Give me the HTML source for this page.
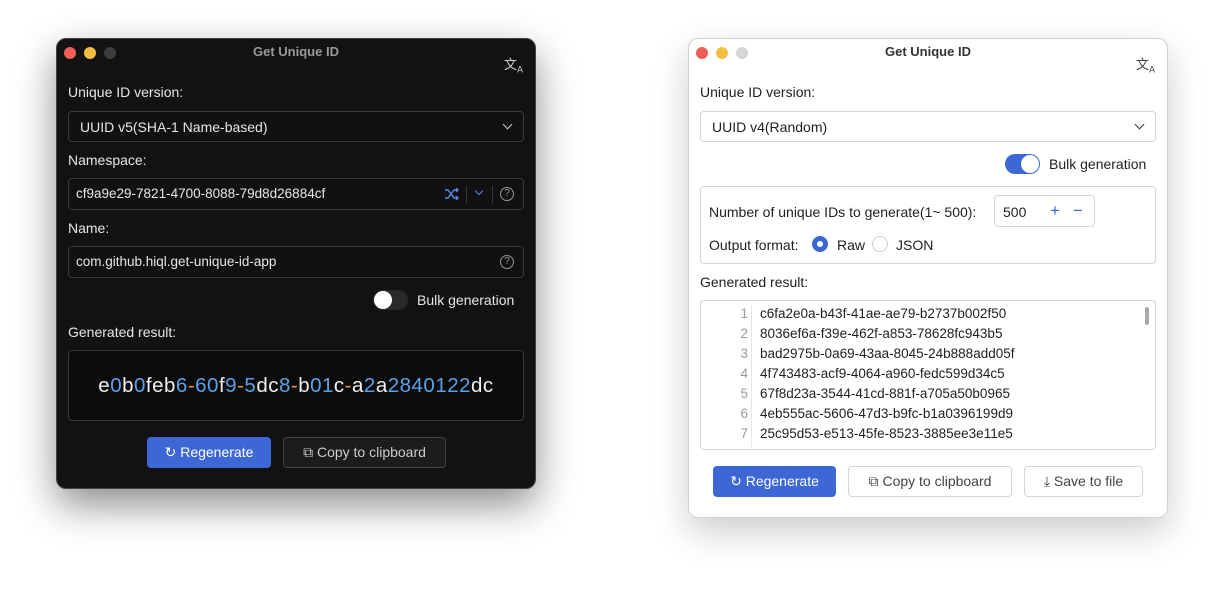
<!DOCTYPE html>
<html><head><meta charset="utf-8"><style>
*{box-sizing:border-box;margin:0;padding:0}
body{width:1224px;height:592px;background:#fff;position:relative;font-family:"Liberation Sans",Helvetica,Arial,sans-serif;font-size:14px;overflow:hidden}
.a{position:absolute}
.win{position:absolute;border-radius:10px;overflow:hidden}
.dark{left:56px;top:38px;width:480px;height:451px;background:#121214;border:1px solid #444;box-shadow:0 16px 40px rgba(0,0,0,.45);color:#e6e6e6}
.light{left:688px;top:38px;width:480px;height:480px;background:#fff;border:1px solid #d0d0d0;box-shadow:0 14px 36px rgba(0,0,0,.2);color:#1f1f1f}
.tl{position:absolute;top:8px;width:12px;height:12px;border-radius:50%}
.title{position:absolute;top:5px;left:0;right:0;text-align:center;font-weight:bold;font-size:13px}
.box{position:absolute;border-radius:4px}
.dark .box{border:1px solid #3a3a3e;background:#111113}
.light .box{border:1px solid #d6d6da;background:#fff}
.btn{position:absolute;height:31px;border-radius:4px;display:flex;align-items:center;justify-content:center;gap:8px;font-size:14px}
.pri{background:#3e67d6;color:#fff}
.chev{position:absolute;width:7px;height:7px;border-right:1.5px solid currentColor;border-bottom:1.5px solid currentColor;transform:rotate(45deg)}
.b{color:#5aa2e6}.o{color:#e8903a}
.ln{position:absolute;left:0;width:47px;text-align:right;color:#9a9a9a}
.q{position:absolute;left:431px;top:8px;width:14px;height:14px;border:1px solid #999;border-radius:50%;font-size:10px;text-align:center;line-height:12px;color:#999}
</style></head><body>

<div class="win dark">
<div class="tl" style="left:7px;background:#ee5d56"></div>
<div class="tl" style="left:27px;background:#f5bd3f"></div>
<div class="tl" style="left:47px;background:#3d3d3f"></div>
<div class="title" style="color:#9a9a9a">Get Unique ID</div>
<div class="a" style="left:447px;top:15px;color:#ccc;font-size:13px">文<sub style="font-size:9px">A</sub></div>
<div class="a" style="left:11px;top:45px">Unique ID version:</div>
<div class="box" style="left:11px;top:72px;width:456px;height:31px"><span class="a" style="left:11px;top:7px">UUID v5(SHA-1 Name-based)</span><span class="chev" style="left:435px;top:9px;color:#ccc"></span></div>
<div class="a" style="left:11px;top:113px">Namespace:</div>
<div class="box" style="left:11px;top:139px;width:456px;height:32px"><span class="a" style="left:7px;top:7px;font-size:13.5px">cf9a9e29-7821-4700-8088-79d8d26884cf</span>
<svg class="a" style="left:375px;top:8px" width="15" height="14" viewBox="0 0 15 14" fill="none" stroke="#5d84e0" stroke-width="1.4"><path d="M1 3h3l6 8h4M1 11h3l6-8h4M12 1l2 2-2 2M12 9l2 2-2 2"/></svg>
<span class="a" style="left:397px;top:7px;width:1px;height:17px;background:#3a3a3e"></span>
<span class="chev" style="left:407px;top:9px;color:#5d84e0;width:6px;height:6px"></span>
<span class="a" style="left:423px;top:7px;width:1px;height:17px;background:#3a3a3e"></span>
<span class="q">?</span></div>
<div class="a" style="left:11px;top:181px">Name:</div>
<div class="box" style="left:11px;top:207px;width:456px;height:32px"><span class="a" style="left:7px;top:7px;font-size:13.5px">com.github.hiql.get-unique-id-app</span>
<span class="q">?</span></div>
<div class="a" style="left:316px;top:251px;width:35px;height:20px;border-radius:10px;background:#2a2a2d"><div class="a" style="left:1px;top:1px;width:18px;height:18px;border-radius:50%;background:#fff"></div></div>
<div class="a" style="left:360px;top:253px">Bulk generation</div>
<div class="a" style="left:11px;top:285px">Generated result:</div>
<div class="box" style="left:11px;top:311px;width:456px;height:71px;background:#0b0b0c"><div class="a" style="left:0;right:0;top:23px;text-align:center;font-size:20.5px;letter-spacing:0.5px;color:#eee">e<span class="b">0</span>b<span class="b">0</span>feb<span class="b">6</span><span class="o">-</span><span class="b">60</span>f<span class="b">9</span><span class="o">-</span><span class="b">5</span>dc<span class="b">8</span><span class="o">-</span>b<span class="b">01</span>c<span class="o">-</span>a<span class="b">2</span>a<span class="b">2840122</span>dc</div></div>
<div class="btn pri" style="left:90px;top:398px;width:124px">↻ Regenerate</div>
<div class="btn" style="left:226px;top:398px;width:163px;border:1px solid #444;background:#1c1c1e;color:#ccc">⧉ Copy to clipboard</div>
</div>

<div class="win light">
<div class="tl" style="left:7px;background:#ee5d56"></div>
<div class="tl" style="left:27px;background:#f5bd3f"></div>
<div class="tl" style="left:47px;background:#d6d6d6"></div>
<div class="title" style="color:#333">Get Unique ID</div>
<div class="a" style="left:447px;top:15px;color:#444;font-size:13px">文<sub style="font-size:9px">A</sub></div>
<div class="a" style="left:11px;top:45px">Unique ID version:</div>
<div class="box" style="left:11px;top:72px;width:456px;height:31px"><span class="a" style="left:11px;top:7px">UUID v4(Random)</span><span class="chev" style="left:435px;top:9px;color:#333"></span></div>
<div class="a" style="left:316px;top:115px;width:35px;height:20px;border-radius:10px;background:#3e67d6"><div class="a" style="left:16px;top:1px;width:18px;height:18px;border-radius:50%;background:#fff"></div></div>
<div class="a" style="left:360px;top:117px">Bulk generation</div>
<div class="box" style="left:11px;top:147px;width:456px;height:78px">
<span class="a" style="left:8px;top:17px">Number of unique IDs to generate(1~ 500):</span>
<div class="a" style="left:293px;top:8px;width:101px;height:32px;border:1px solid #d6d6da;border-radius:4px"><span class="a" style="left:8px;top:8px">500</span><span class="a" style="left:55px;top:5px;color:#3e67d6;font-size:17px">+</span><span class="a" style="left:78px;top:5px;color:#3e67d6;font-size:17px">−</span></div>
<span class="a" style="left:8px;top:50px">Output format:</span>
<span class="a" style="left:111px;top:49px;width:16px;height:16px;border-radius:50%;border:5px solid #3e67d6"></span>
<span class="a" style="left:136px;top:50px">Raw</span>
<span class="a" style="left:171px;top:49px;width:16px;height:16px;border-radius:50%;border:1px solid #ccc"></span>
<span class="a" style="left:195px;top:50px">JSON</span></div>
<div class="a" style="left:11px;top:235px">Generated result:</div>
<div class="box" style="left:11px;top:261px;width:456px;height:150px;overflow:hidden;font-size:13.5px">
<div class="a" style="left:50px;top:4px;width:1px;height:142px;background:#e6e6e6"></div>
<div class="a" style="left:444px;top:6px;width:4px;height:18px;background:#aaa;border-radius:2px"></div>
<div class="ln" style="top:5px">1</div><div class="a" style="left:59px;top:5px">c6fa2e0a-b43f-41ae-ae79-b2737b002f50</div>
<div class="ln" style="top:25px">2</div><div class="a" style="left:59px;top:25px">8036ef6a-f39e-462f-a853-78628fc943b5</div>
<div class="ln" style="top:45px">3</div><div class="a" style="left:59px;top:45px">bad2975b-0a69-43aa-8045-24b888add05f</div>
<div class="ln" style="top:65px">4</div><div class="a" style="left:59px;top:65px">4f743483-acf9-4064-a960-fedc599d34c5</div>
<div class="ln" style="top:85px">5</div><div class="a" style="left:59px;top:85px">67f8d23a-3544-41cd-881f-a705a50b0965</div>
<div class="ln" style="top:105px">6</div><div class="a" style="left:59px;top:105px">4eb555ac-5606-47d3-b9fc-b1a0396199d9</div>
<div class="ln" style="top:125px">7</div><div class="a" style="left:59px;top:125px">25c95d53-e513-45fe-8523-3885ee3e11e5</div>
</div>
<div class="btn pri" style="left:24px;top:427px;width:123px">↻ Regenerate</div>
<div class="btn" style="left:159px;top:427px;width:164px;border:1px solid #d6d6da;color:#444">⧉ Copy to clipboard</div>
<div class="btn" style="left:335px;top:427px;width:119px;border:1px solid #d6d6da;color:#444">⤓ Save to file</div>
</div>
</body></html>
